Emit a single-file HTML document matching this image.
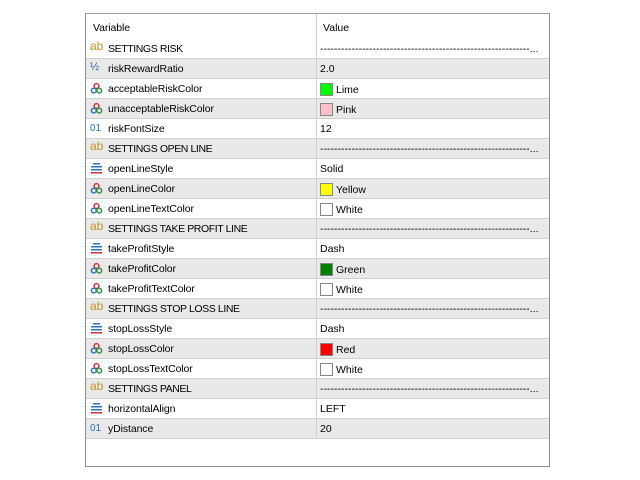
<!DOCTYPE html><html><head><style>
body{margin:0;width:640px;height:480px;background:#fff;font-family:"Liberation Sans",sans-serif;font-size:10.5px;color:#000;position:relative;overflow:hidden}
#box{position:absolute;left:85px;top:13px;width:463px;height:452px;border:1px solid #8a8e93;border-top-color:#a0a0a0}
.r{position:absolute;left:0;width:463px;height:19px;border-bottom:1px solid #cfcfcf}
.g{background:#e9e9e9}
.n{position:absolute;left:22px;top:4px;white-space:nowrap;letter-spacing:-0.1px}
.v{position:absolute;left:234px;top:4px;white-space:nowrap}
.ic{position:absolute;left:4px;top:3px;width:13px;height:13px;font-size:11px}
.d{position:absolute;left:230px;top:0;width:1px;height:20px;background:#cfcfcf}
.sw{display:inline-block;width:11px;height:11px;border:1px solid #888;vertical-align:-3px;margin-right:3px}
</style></head><body><div id="box">
<div class="r" style="top:0;height:24px;border-bottom:none"><div class="n" style="left:7px;top:8px">Variable</div><div class="d" style="height:25px"></div><div class="v" style="left:237px;top:8px">Value</div></div>
</div>
<script>
var ab='<span style="color:#c8901e;font-size:12px;position:relative;top:-3px">ab</span>';
var half='<span style="color:#3060a0;font-size:11px;position:relative;top:-1px">½</span>';
var o1='<span style="color:#2d6db5;font-size:10px;position:relative;top:0px">01</span>';
var col='<svg width="13" height="13"><circle cx="6.5" cy="4" r="2.4" fill="none" stroke="#d03030" stroke-width="1.4"/><circle cx="3.8" cy="8.6" r="2.4" fill="none" stroke="#2a70c0" stroke-width="1.4"/><circle cx="9.2" cy="8.6" r="2.4" fill="none" stroke="#2a9030" stroke-width="1.4"/></svg>';
var ln='<svg width="13" height="13"><rect x="3" y="1" width="7" height="1.5" fill="#2a70c0"/><rect x="1" y="4" width="11" height="1.5" fill="#2a70c0"/><rect x="1" y="7" width="11" height="1.5" fill="#2a70c0"/><rect x="1" y="10" width="11" height="1.5" fill="#d03030"/></svg>';
var D='------------------------------------------------------------...';
var rows=[[ab,'SETTINGS RISK',D],[half,'riskRewardRatio','2.0'],[col,'acceptableRiskColor','#00ff00|Lime'],[col,'unacceptableRiskColor','#ffc0cb|Pink'],[o1,'riskFontSize','12'],
[ab,'SETTINGS OPEN LINE',D],[ln,'openLineStyle','Solid'],[col,'openLineColor','#ffff00|Yellow'],[col,'openLineTextColor','#ffffff|White'],
[ab,'SETTINGS TAKE PROFIT LINE',D],[ln,'takeProfitStyle','Dash'],[col,'takeProfitColor','#008000|Green'],[col,'takeProfitTextColor','#ffffff|White'],
[ab,'SETTINGS STOP LOSS LINE',D],[ln,'stopLossStyle','Dash'],[col,'stopLossColor','#ff0000|Red'],[col,'stopLossTextColor','#ffffff|White'],
[ab,'SETTINGS PANEL',D],[ln,'horizontalAlign','LEFT'],[o1,'yDistance','20']];
var h='';rows.forEach(function(r,i){var v=r[2];if(v.indexOf('|')>0){var p=v.split('|');v='<span class="sw" style="background:'+p[0]+'"></span>'+p[1];}
var nm=r[1];if(nm.indexOf('SETTINGS')==0)nm='<span style="letter-spacing:-0.4px">'+nm+'</span>';
h+='<div class="r'+(i%2?' g':'')+'" style="top:'+(25+i*20)+'px"><div class="ic">'+r[0]+'</div><div class="n">'+nm+'</div><div class="d"></div><div class="v">'+v+'</div></div>';});
document.getElementById('box').insertAdjacentHTML('beforeend',h);
</script></body></html>
